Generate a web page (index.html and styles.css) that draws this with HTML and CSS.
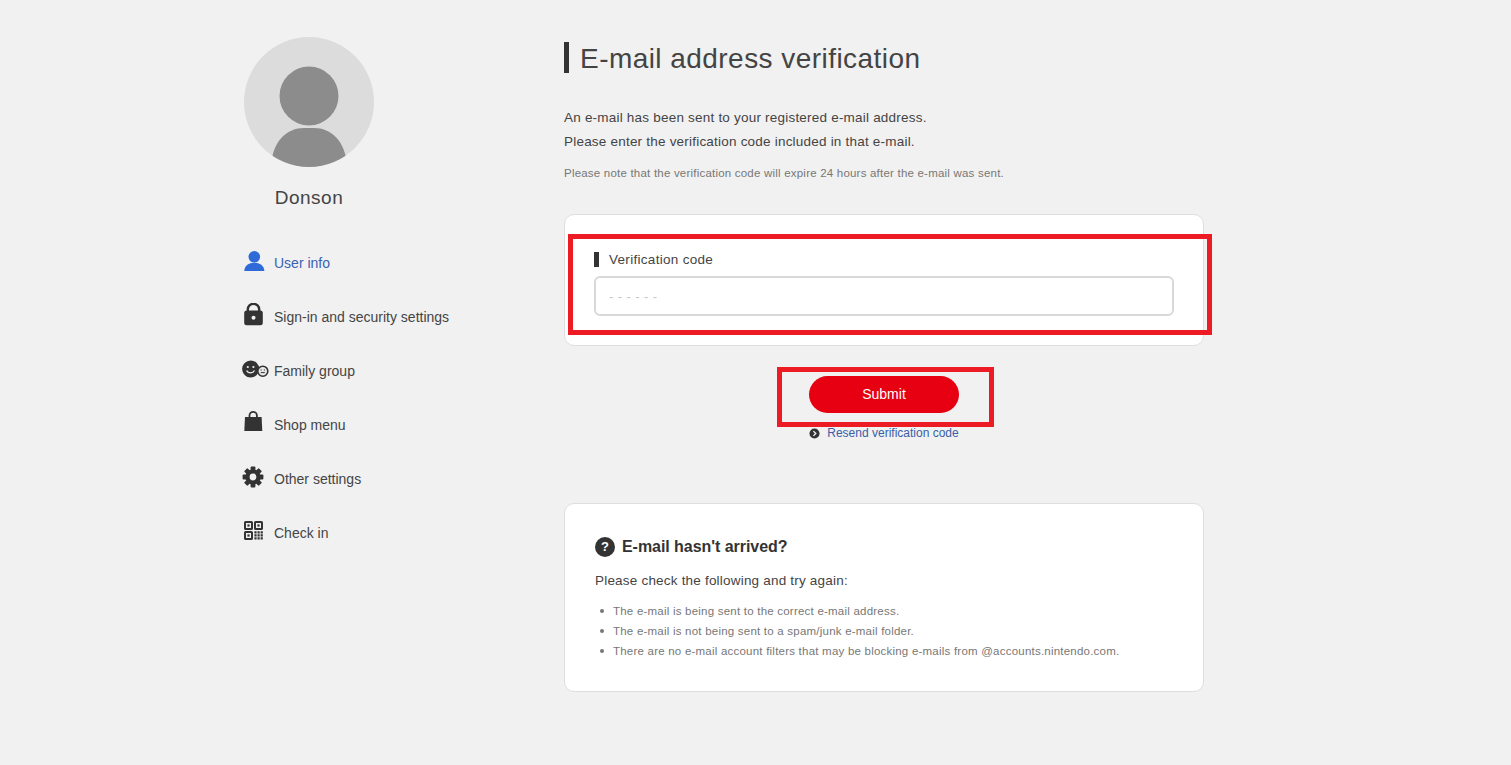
FILE: index.html
```html
<!DOCTYPE html>
<html lang="en">
<head>
<meta charset="utf-8">
<title>E-mail address verification</title>
<link rel="stylesheet" href="styles.css">
</head>
<body>
<div class="page">
  <aside class="sidebar">
    <div class="profile">
      <svg class="avatar" viewBox="0 0 130 130" width="130" height="130" aria-hidden="true">
        <defs><clipPath id="avatar-clip"><circle cx="65" cy="65" r="65"/></clipPath></defs>
        <circle cx="65" cy="65" r="65" fill="#dcdcdc"/>
        <g clip-path="url(#avatar-clip)">
          <circle cx="65" cy="59" r="29.5" fill="#8c8c8c"/>
          <path d="M27 130 C28 104 43 91 60 91 H70 C87 91 102 104 103 130 Z" fill="#8c8c8c"/>
        </g>
      </svg>
      <div class="profile-name">Donson</div>
    </div>
    <nav class="nav">
      <a class="nav-item active">
        <svg class="nav-icon" viewBox="0 0 32 28" aria-hidden="true"><circle cx="12.3" cy="7.8" r="5.8" fill="#2f6bd8"/><path d="M2.2 22 C2.8 16.5 6.5 13.8 12.3 13.8 S21.8 16.5 22.4 22 Z" fill="#2f6bd8"/></svg>
        <span>User info</span>
      </a>
      <a class="nav-item">
        <svg class="nav-icon" viewBox="0 0 32 28" aria-hidden="true"><path d="M5.8 9 V6.5 A5.7 5.7 0 0 1 17.2 6.5 V9" fill="none" stroke="#333" stroke-width="2.4"/><rect x="2.2" y="7.5" width="18.6" height="14.8" rx="2.5" fill="#333"/><circle cx="11.5" cy="14.8" r="2" fill="#f1f1f1"/></svg>
        <span>Sign-in and security settings</span>
      </a>
      <a class="nav-item">
        <svg class="nav-icon" viewBox="0 0 32 28" aria-hidden="true"><circle cx="8.7" cy="12" r="8.6" fill="#333"/><circle cx="5.8" cy="10" r="1.1" fill="#f1f1f1"/><circle cx="11.4" cy="10" r="1.1" fill="#f1f1f1"/><path d="M4.7 13.5 C6 16.6 11 16.6 12.5 13.5" fill="none" stroke="#f1f1f1" stroke-width="1.2"/><circle cx="20.8" cy="14.2" r="5" fill="#e8e8e8" stroke="#333" stroke-width="1.6"/><path d="M18.5 13 h1.2 M21.8 13 h1.2 M18.8 15.6 h4" stroke="#333" stroke-width="1"/></svg>
        <span>Family group</span>
      </a>
      <a class="nav-item">
        <svg class="nav-icon" viewBox="0 0 32 28" aria-hidden="true"><path d="M7.5 7 V4.6 A3.7 3.7 0 0 1 14.9 4.6 V7" fill="none" stroke="#333" stroke-width="1.8"/><path d="M3 6 H19.6 L20.3 20 H2.3 Z" fill="#333"/></svg>
        <span>Shop menu</span>
      </a>
      <a class="nav-item">
        <svg class="nav-icon" viewBox="0 0 32 28" aria-hidden="true"><g fill="#333"><circle cx="11" cy="12" r="7.6"/><rect x="8.6" y="1.6" width="4.8" height="20.8" rx="1"/><rect x="8.6" y="1.6" width="4.8" height="20.8" rx="1" transform="rotate(45 11 12)"/><rect x="8.6" y="1.6" width="4.8" height="20.8" rx="1" transform="rotate(90 11 12)"/><rect x="8.6" y="1.6" width="4.8" height="20.8" rx="1" transform="rotate(135 11 12)"/></g><circle cx="11" cy="12" r="3.4" fill="#f1f1f1"/></svg>
        <span>Other settings</span>
      </a>
      <a class="nav-item">
        <svg class="nav-icon" viewBox="0 0 32 28" aria-hidden="true"><g fill="none" stroke="#333" stroke-width="2"><rect x="3" y="3" width="7" height="7" rx=".6"/><rect x="13" y="3" width="7" height="7" rx=".6"/><rect x="3" y="13" width="7" height="7" rx=".6"/></g><g fill="#333"><rect x="5.4" y="5.4" width="2.2" height="2.2"/><rect x="15.4" y="5.4" width="2.2" height="2.2"/><rect x="5.4" y="15.4" width="2.2" height="2.2"/><path d="M12.4 12.2h2.2v2.2h-2.2zM15.5 12.2h2.2v2.2h-2.2zM18.6 12.2h2.2v2.2h-2.2zM12.4 15.2h2.2v2.2h-2.2zM15.5 15.2h2.2v2.2h-2.2zM18.6 15.2h2.2v2.2h-2.2zM12.4 18.2h2.2v2.2h-2.2zM15.5 18.2h2.2v2.2h-2.2zM18.6 18.2h2.2v2.2h-2.2z"/></g></svg>
        <span>Check in</span>
      </a>
    </nav>
  </aside>

  <main class="main">
    <h1 class="title">E-mail address verification</h1>
    <p class="intro">An e-mail has been sent to your registered e-mail address.<br>Please enter the verification code included in that e-mail.</p>
    <p class="note">Please note that the verification code will expire 24 hours after the e-mail was sent.</p>

    <section class="card code-card">
      <label class="field-label" for="code">Verification code</label>
      <input class="field-input" id="code" type="text" placeholder="- - - - - -">
    </section>

    <div class="actions">
      <button class="submit" type="button">Submit</button>
      <a class="resend">
        <svg class="resend-icon" viewBox="0 0 12 12" aria-hidden="true"><circle cx="6" cy="6" r="5.5" fill="#333"/><path d="M4.8 3.4 L7.4 6 L4.8 8.6" fill="none" stroke="#f1f1f1" stroke-width="1.5"/></svg>
        <span>Resend verification code</span>
      </a>
    </div>

    <section class="card help-card">
      <h2 class="help-title"><span class="help-mark">?</span>E-mail hasn't arrived?</h2>
      <p class="help-lead">Please check the following and try again:</p>
      <ul class="help-list">
        <li>The e-mail is being sent to the correct e-mail address.</li>
        <li>The e-mail is not being sent to a spam/junk e-mail folder.</li>
        <li>There are no e-mail account filters that may be blocking e-mails from @accounts.nintendo.com.</li>
      </ul>
    </section>
  </main>

  <div class="mark mark-field"></div>
  <div class="mark mark-submit"></div>
</div>
</body>
</html>
```
FILE: styles.css
```css
* { box-sizing: border-box; }
html, body { margin: 0; padding: 0; }
body {
  background: #f1f1f1;
  color: #333;
  font-family: "Liberation Sans", Arial, sans-serif;
  height: 765px;
  overflow: hidden;
}
.page {
  position: relative;
  display: flex;
  padding: 37px 0 0 244px;
  height: 765px;
}
.sidebar { width: 320px; flex: none; }
.profile { width: 130px; text-align: center; }
.avatar { display: block; }
.profile-name {
  width: 130px;
  margin-top: 19px;
  font-size: 19px;
  line-height: 24px;
  letter-spacing: .5px;
  color: #444;
}
.nav { display: flex; flex-direction: column; margin-top: 26px; }
.nav-item {
  display: flex;
  align-items: center;
  height: 54px;
  font-size: 14px;
  color: #444;
}
.nav-item.active { color: #3a62b4; }
.nav-icon { width: 32px; height: 28px; margin: 0 0 0 -2px; flex: none; }

.main { width: 640px; flex: none; padding-top: 5px; }
.title {
  margin: 0;
  height: 31px;
  padding-left: 11px;
  border-left: 5px solid #333;
  font-size: 28px;
  font-weight: 400;
  line-height: 33px;
  letter-spacing: .45px;
  color: #444;
}
.intro {
  margin: 33px 0 0;
  font-size: 13.5px;
  line-height: 24px;
  letter-spacing: .21px;
  color: #444;
}
.note {
  margin: 11px 0 0;
  font-size: 11.5px;
  line-height: 16px;
  letter-spacing: .21px;
  color: #777;
}
.card {
  background: #fff;
  border: 1px solid #dedede;
  border-radius: 10px;
}
.code-card { margin-top: 33px; height: 132px; padding: 36px 29px 0; }
.field-label {
  display: block;
  height: 15px;
  margin-top: 1px;
  padding-left: 10px;
  border-left: 5px solid #333;
  font-size: 13.5px;
  line-height: 15px;
  letter-spacing: .3px;
  color: #444;
}
.field-input {
  display: block;
  width: 580px;
  height: 40px;
  margin-top: 9px;
  padding: 0 13px;
  background: #fff;
  border: 2px solid #d8d8d8;
  border-radius: 6px;
  font-family: inherit;
  font-size: 13px;
  letter-spacing: .4px;
  outline: none;
}
.field-input::placeholder { color: #c8c8c8; opacity: 1; }
.actions {
  display: flex;
  flex-direction: column;
  align-items: center;
  margin-top: 30px;
}
.submit {
  width: 150px;
  height: 37px;
  padding: 0 0 2px;
  background: #e60012;
  border: 0;
  border-radius: 19px;
  color: #fff;
  font-family: inherit;
  font-size: 14px;
  font-weight: 400;
}
.resend {
  display: flex;
  align-items: center;
  gap: 7px;
  margin-top: 12px;
  height: 16px;
  font-size: 12px;
  line-height: 16px;
  color: #3a5ea8;
}
.resend-icon { width: 11px; height: 11px; flex: none; }
.help-card { margin-top: 62px; height: 189px; padding: 33px 30px 0; }
.help-title {
  display: flex;
  align-items: center;
  gap: 7px;
  margin: 0;
  height: 20px;
  font-size: 16px;
  line-height: 20px;
  font-weight: 700;
  letter-spacing: -.05px;
  color: #333;
}
.help-mark {
  display: flex;
  align-items: center;
  justify-content: center;
  width: 20px;
  height: 20px;
  border-radius: 50%;
  background: #333;
  color: #fff;
  font-size: 13px;
}
.help-lead {
  margin: 13px 0 0;
  padding-top: 1px;
  font-size: 13.5px;
  line-height: 20px;
  letter-spacing: .2px;
  color: #444;
}
.help-list {
  margin: 10px 0 0;
  padding: 0 0 0 18px;
  list-style: none;
  font-size: 11.5px;
  line-height: 20px;
  letter-spacing: .22px;
  color: #777;
}
.help-list li { position: relative; }
.help-list li::before {
  content: "";
  position: absolute;
  left: -13px;
  top: 8px;
  width: 4px;
  height: 4px;
  border-radius: 50%;
  background: #777;
}
.mark { position: absolute; border: 5px solid #ed1c24; pointer-events: none; }
.mark-field { left: 568px; top: 234px; width: 644px; height: 101px; }
.mark-submit { left: 777px; top: 367px; width: 217px; height: 60px; }
```
